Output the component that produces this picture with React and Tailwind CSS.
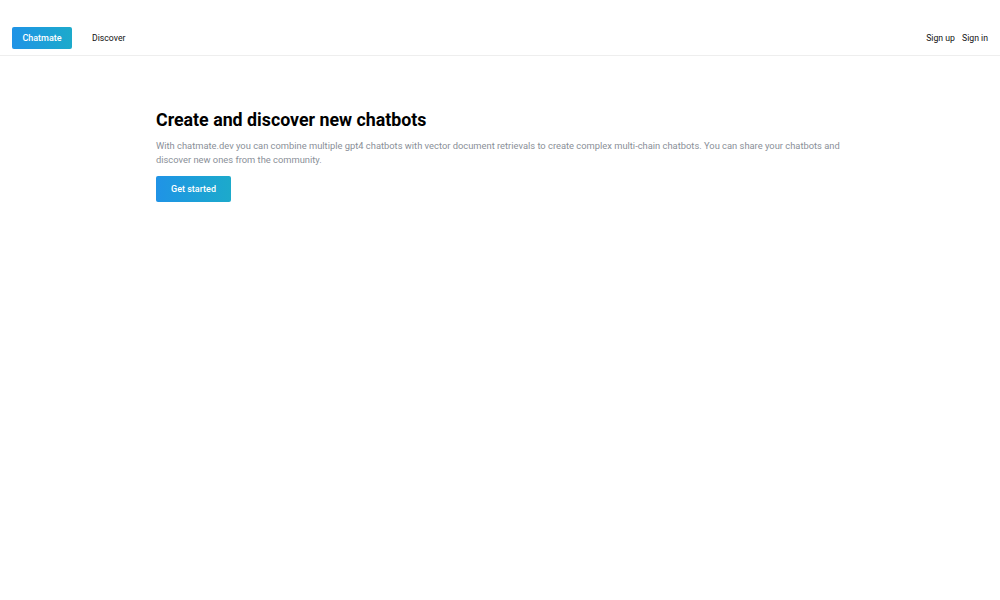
export default function App() {
  return (
    <div className="min-h-[600px] bg-white" style={{ fontFamily: "Roboto, 'Noto Sans', sans-serif" }}>
      <header className="flex h-[56px] items-end justify-between border-b border-[#eeeeee] px-3 pb-[6px]">
        <nav className="flex items-center gap-[20px]">
          <button className="h-[22px] w-[60px] rounded-[2px] bg-gradient-to-r from-[#2093e6] to-[#1daacb] pt-[1px] text-[9px] font-medium text-white">
            Chatmate
          </button>
          <span className="pt-[1px] text-[8.7px] text-[#111]">Discover</span>
        </nav>
        <div className="flex h-[22px] items-center gap-[7px] pt-[1px] text-[8.7px] text-[#111]">
          <span>Sign up</span>
          <span>Sign in</span>
        </div>
      </header>
      <main className="mx-auto w-[688px] pt-[52px]">
        <h1 className="text-[17.8px] font-bold leading-[24px] text-[#000]">Create and discover new chatbots</h1>
        <p className="mt-[7px] text-[9.35px] leading-[14px] text-[#8a8f98]">
          With chatmate.dev you can combine multiple gpt4 chatbots with vector document retrievals to create complex multi-chain chatbots. You can share your chatbots and discover new ones from the community.
        </p>
        <button className="mt-[9px] h-[26px] w-[75px] rounded-[2px] bg-gradient-to-r from-[#2093e6] to-[#1daacb] pt-[1px] text-[9px] font-medium text-white">
          Get started
        </button>
      </main>
    </div>
  );
}
